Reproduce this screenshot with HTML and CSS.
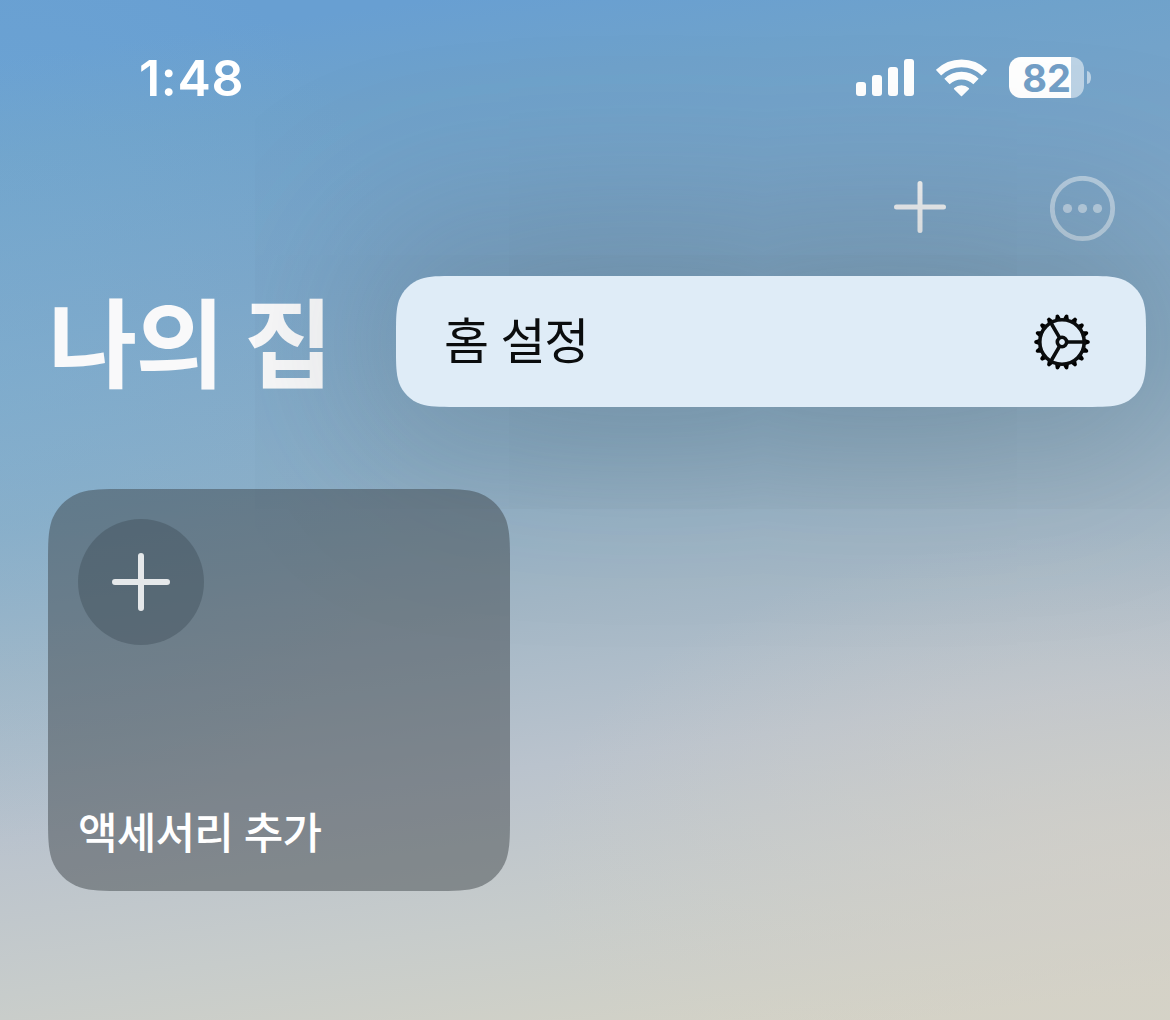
FILE: index.html
```
<!DOCTYPE html>
<html lang="ko">
<head>
    <meta charset="UTF-8">
    <meta name="viewport" content="width=device-width, initial-scale=1.0">
    <title>나의 집</title>
    <link rel="stylesheet" href="styles.css">
</head>
<body>
    <div class="screen">
        <header class="status-bar">
            <div class="time">1:48</div>
            <div class="status-icons">
                <svg class="signal" width="58" height="37" viewBox="0 0 58 37">
                    <rect x="0" y="23" width="10" height="14" rx="3"/>
                    <rect x="16" y="16" width="10" height="21" rx="3"/>
                    <rect x="32" y="8" width="10" height="29" rx="3"/>
                    <rect x="48" y="0" width="10" height="37" rx="3"/>
                </svg>
                <svg class="wifi" width="52" height="38" viewBox="-25.5 -37.5 52 38">
                    <path class="arc" d="M-23 -23.8A33.1 33.1 0 0 1 23 -23.8"/>
                    <path class="arc" d="M-14.5 -15A20.8 20.8 0 0 1 14.5 -15"/>
                    <path class="dot" d="M-6.8 -7.8A10.4 10.4 0 0 1 6.8 -7.8L0 -1Z"/>
                </svg>
                <div class="battery">
                    <div class="battery-body"><span class="battery-level">82</span></div>
                    <div class="battery-cap"></div>
                </div>
            </div>
        </header>

        <nav class="toolbar">
            <svg class="add" width="54" height="54" viewBox="0 0 54 54">
                <path d="M27 3.5V50.5M3.5 27H50.5"/>
            </svg>
            <svg class="more" width="66" height="66" viewBox="0 0 66 66">
                <circle class="ring" cx="32.5" cy="32.5" r="30.2"/>
                <circle cx="17.5" cy="32.5" r="4.6"/>
                <circle cx="32.5" cy="32.5" r="4.6"/>
                <circle cx="47.5" cy="32.5" r="4.6"/>
            </svg>
        </nav>

        <div class="title-row">
            <h1>나의 집</h1>
            <div class="menu-wrap">
                <div class="menu">
                    <span class="menu-label">홈 설정</span>
                    <svg class="gear" width="58" height="58" viewBox="-29 -29 58 58">
                        <defs>
                            <g id="teeth">
                                <path id="tooth" d="M23 -3L27.2 -1.5Q28.6 0 27.2 1.5L23 3Z"/>
                                <use href="#tooth" transform="rotate(20)"/>
                                <use href="#tooth" transform="rotate(40)"/>
                            </g>
                        </defs>
                        <use href="#teeth"/>
                        <use href="#teeth" transform="rotate(60)"/>
                        <use href="#teeth" transform="rotate(120)"/>
                        <use href="#teeth" transform="rotate(180)"/>
                        <use href="#teeth" transform="rotate(240)"/>
                        <use href="#teeth" transform="rotate(300)"/>
                        <circle class="line" r="22.2"/>
                        <circle class="line" r="4.7"/>
                        <path class="line" d="M5 0H22M-2.5 -4.3L-11 -19M-2.5 4.3L-11 19"/>
                    </svg>
                </div>
            </div>
        </div>

        <main class="tiles">
            <div class="tile">
                <div class="tile-icon">
                    <svg width="58" height="58" viewBox="0 0 58 58">
                        <path d="M29 3V55M3 29H55"/>
                    </svg>
                </div>
                <div class="tile-label">액세서리 추가</div>
            </div>
        </main>
    </div>
</body>
</html>
```
FILE: styles.css
```
* {
    box-sizing: border-box;
}

body {
    margin: 0;
    font-family: Inter, "Noto Sans CJK KR", sans-serif;
    color: #fff;
}

.screen {
    width: 1170px;
    height: 1020px;
    overflow: hidden;
    background:
        radial-gradient(ellipse 600px 330px at 1130px 860px, rgba(213, 208, 200, 0.65), rgba(213, 208, 200, 0)),
        radial-gradient(ellipse 420px 480px at 0 380px, rgba(125, 180, 215, 0.35), rgba(125, 180, 215, 0)),
        linear-gradient(172deg, #689fd2 5%, #6fa2cb 13%, #7ba5c8 27%, #8badc6 44%, #a3b7c6 57%, #bac3cd 71%, #c7cccb 84%, #d4d3c6 97%);
}

.status-bar {
    height: 156px;
    padding: 57px 79px 0 139px;
    display: flex;
    justify-content: space-between;
    align-items: flex-start;
}

.time {
    font-size: 50px;
    line-height: 42px;
    font-weight: 600;
    letter-spacing: 0.7px;
}

.status-icons {
    display: flex;
    align-items: center;
    height: 41px;
}

.status-icons svg {
    fill: #fff;
}

.wifi {
    margin-left: 22px;
}

.wifi .arc {
    fill: none;
    stroke: #fff;
    stroke-width: 7.6;
}

.wifi .dot {
    stroke: #fff;
    stroke-width: 1.6;
    stroke-linejoin: round;
}

.battery {
    display: flex;
    align-items: center;
    margin-left: 21px;
}

.battery-body {
    width: 75px;
    height: 41px;
    border-radius: 12px;
    background: linear-gradient(90deg, #fff 62px, rgba(255, 255, 255, 0.52) 62px);
    text-align: center;
}

.battery-level {
    font-size: 38px;
    line-height: 42px;
    font-weight: 700;
    color: #739fc7;
}

.battery-cap {
    width: 4px;
    height: 13px;
    margin-left: 3px;
    border-radius: 0 4px 4px 0 / 0 6px 6px 0;
    background: rgba(255, 255, 255, 0.52);
}

.toolbar {
    height: 120px;
    padding: 20px 54px 0 0;
    display: flex;
    justify-content: flex-end;
    gap: 103px;
}

.toolbar .add {
    margin-top: 4px;
    fill: none;
    stroke: #f3f4f5;
    stroke-width: 5;
    stroke-linecap: round;
}

.toolbar .more {
    fill: rgba(255, 255, 255, 0.45);
}

.toolbar .ring {
    fill: none;
    stroke: rgba(255, 255, 255, 0.45);
    stroke-width: 4.8;
}

.title-row {
    height: 213px;
    padding: 0 24px 0 48px;
    display: flex;
    justify-content: space-between;
    align-items: flex-start;
}

h1 {
    margin: 0;
    padding-top: 3px;
    font-size: 97px;
    line-height: 131px;
    font-weight: 700;
    letter-spacing: -1.8px;
    color: #f9f9fa;
}

.menu-wrap {
    width: 750px;
    border-radius: 52px;
    box-shadow: 0 0 200px 20px rgba(66, 82, 86, 0.42);
}

.menu {
    height: 131px;
    padding: 0 55px 0 48px;
    display: flex;
    justify-content: space-between;
    align-items: center;
    background: #dfecf7;
    color: #0b0d0e;
    clip-path: path("M59.6 0H690.4C707.5 0 716.1 0 725.4 2.9C735.5 6.6 743.4 14.5 747.1 24.6C750 33.9 750 42.5 750 59.6V71.4C750 88.5 750 97.1 747.1 106.4C743.4 116.5 735.5 124.4 725.4 128.1C716.1 131 707.5 131 690.4 131H59.6C42.5 131 33.9 131 24.6 128.1C14.5 124.4 6.6 116.5 2.9 106.4C0 97.1 0 88.5 0 71.4V59.6C0 42.5 0 33.9 2.9 24.6C6.6 14.5 14.5 6.6 24.6 2.9C33.9 0 42.5 0 59.6 0Z");
}

.menu-label {
    font-size: 49px;
    line-height: 60px;
    letter-spacing: -1.2px;
}

.gear .line {
    fill: none;
    stroke: #0b0d0e;
    stroke-width: 3.6;
}

.tiles {
    padding-left: 48px;
}

.tile {
    width: 462px;
    height: 402px;
    padding: 30px;
    display: flex;
    flex-direction: column;
    justify-content: space-between;
    background: rgba(55, 62, 65, 0.46);
    clip-path: path("M76.4 0H385.6C407.6 0 418.6 0 430.4 3.7C443.4 8.5 453.5 18.6 458.3 31.6C462 43.4 462 54.4 462 76.4V325.6C462 347.6 462 358.6 458.3 370.4C453.5 383.4 443.4 393.5 430.4 398.3C418.6 402 407.6 402 385.6 402H76.4C54.4 402 43.4 402 31.6 398.3C18.6 393.5 8.5 383.4 3.7 370.4C0 358.6 0 347.6 0 325.6V76.4C0 54.4 0 43.4 3.7 31.6C8.5 18.6 18.6 8.5 31.6 3.7C43.4 0 54.4 0 76.4 0Z");
}

.tile-icon {
    width: 126px;
    height: 126px;
    border-radius: 50%;
    display: flex;
    align-items: center;
    justify-content: center;
    background: rgba(60, 75, 85, 0.4);
}

.tile-icon svg {
    fill: none;
    stroke: #e5e8ea;
    stroke-width: 6;
    stroke-linecap: round;
}

.tile-label {
    font-size: 43px;
    line-height: 56px;
    font-weight: 500;
    letter-spacing: -0.8px;
}
```
